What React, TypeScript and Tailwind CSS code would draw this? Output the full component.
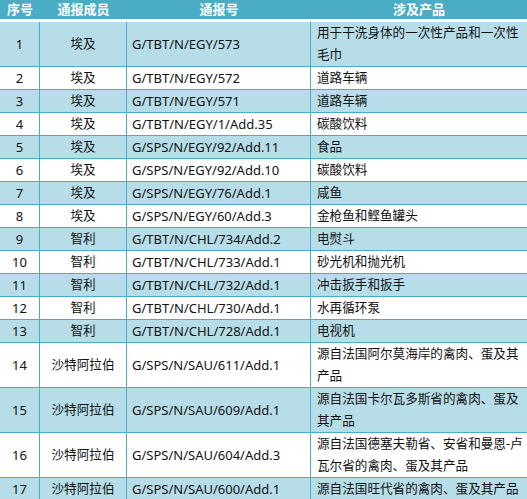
const rows: [string, string, string, string[]][] = [
  ["1", "埃及", "G/TBT/N/EGY/573", ["用于干洗身体的一次性产品和一次性", "毛巾"]],
  ["2", "埃及", "G/TBT/N/EGY/572", ["道路车辆"]],
  ["3", "埃及", "G/TBT/N/EGY/571", ["道路车辆"]],
  ["4", "埃及", "G/TBT/N/EGY/1/Add.35", ["碳酸饮料"]],
  ["5", "埃及", "G/SPS/N/EGY/92/Add.11", ["食品"]],
  ["6", "埃及", "G/SPS/N/EGY/92/Add.10", ["碳酸饮料"]],
  ["7", "埃及", "G/SPS/N/EGY/76/Add.1", ["咸鱼"]],
  ["8", "埃及", "G/SPS/N/EGY/60/Add.3", ["金枪鱼和鲣鱼罐头"]],
  ["9", "智利", "G/TBT/N/CHL/734/Add.2", ["电熨斗"]],
  ["10", "智利", "G/TBT/N/CHL/733/Add.1", ["砂光机和抛光机"]],
  ["11", "智利", "G/TBT/N/CHL/732/Add.1", ["冲击扳手和扳手"]],
  ["12", "智利", "G/TBT/N/CHL/730/Add.1", ["水再循环泵"]],
  ["13", "智利", "G/TBT/N/CHL/728/Add.1", ["电视机"]],
  ["14", "沙特阿拉伯", "G/SPS/N/SAU/611/Add.1", ["源自法国阿尔莫海岸的禽肉、蛋及其", "产品"]],
  ["15", "沙特阿拉伯", "G/SPS/N/SAU/609/Add.1", ["源自法国卡尔瓦多斯省的禽肉、蛋及", "其产品"]],
  ["16", "沙特阿拉伯", "G/SPS/N/SAU/604/Add.3", ["源自法国德塞夫勒省、安省和曼恩-卢", "瓦尔省的禽肉、蛋及其产品"]],
  ["17", "沙特阿拉伯", "G/SPS/N/SAU/600/Add.1", ["源自法国旺代省的禽肉、蛋及其产品"]],
];

export default function App() {
  return (
    <div
      className="w-[527px] h-[499px] overflow-hidden bg-white text-[13px] text-[#111]"
      style={{ fontFamily: '"Noto Sans", "Noto Sans CJK SC", sans-serif' }}
    >
      {/* 表头 */}
      <div className="flex h-[19px] items-center bg-[#4bacc6] font-bold text-white border-b-[3px] border-white box-content">
        <div className="w-[40px] text-center">序号</div>
        <div className="w-[87px] text-center">通报成员</div>
        <div className="w-[184px] text-center">通报号</div>
        <div className="flex-1 text-center">涉及产品</div>
      </div>

      {rows.map(([no, member, code, product], i) => (
        <div
          key={no}
          className={`flex border-b border-[#4bacc6] leading-[22px] ${i % 2 === 0 ? "bg-[#b7dde8]" : "bg-white"}`}
        >
          <div className="w-[40px] shrink-0 flex items-center justify-center border-r border-[#4bacc6]">{no}</div>
          <div className="w-[87px] shrink-0 flex items-center justify-center border-r border-[#4bacc6] text-[12.6px]">{member}</div>
          <div className="w-[184px] shrink-0 flex items-center pl-[5px] border-r border-[#4bacc6] whitespace-nowrap">{code}</div>
          <div className="flex-1 pl-[6px] whitespace-nowrap text-[12.6px]">
            {product.map((line) => (
              <div key={line}>{line}</div>
            ))}
          </div>
        </div>
      ))}
    </div>
  );
}
